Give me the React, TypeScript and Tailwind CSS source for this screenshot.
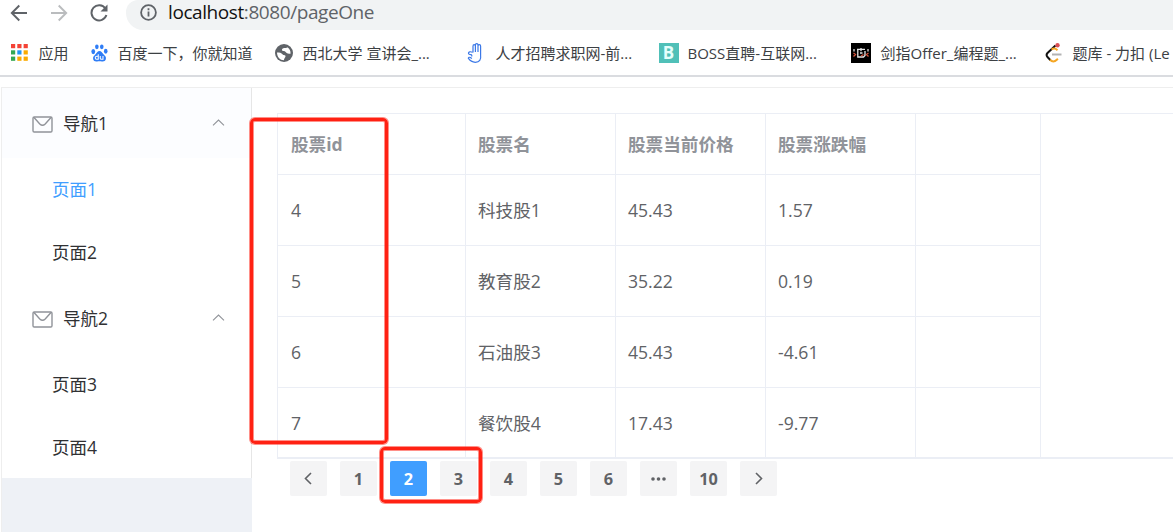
import type { ReactNode } from "react";

const Arrow = ({ flip = false, color }: { flip?: boolean; color: string }) => (
  <svg width="18" height="18" viewBox="0 0 18 18" fill="none" stroke={color} strokeWidth="1.9" className={flip ? "rotate-180" : ""}>
    <path d="M17 9H2M9.3 1.5L1.8 9l7.5 7.5" />
  </svg>
);

const Mail = () => (
  <svg width="21" height="17" viewBox="0 0 21 17" fill="none" stroke="#909399" strokeWidth="1.4">
    <rect x="1" y="1" width="19" height="15" rx="1.2" />
    <path d="M2 1.5l5.8 6.5q2.7 2.6 5.4 0L19 1.5" />
  </svg>
);

const AppsIcon = () => {
  const colors = ["#f44336", "#f44336", "#f44336", "#34a853", "#2196f3", "#fbab00", "#34a853", "#fbab00", "#fbab00"];
  return (
    <svg width="17" height="17" viewBox="0 0 17 17">
      {colors.map((c, i) => (
        <rect key={i} x={(i % 3) * 6.3} y={Math.floor(i / 3) * 6.3} width="4.2" height="4.2" fill={c} />
      ))}
    </svg>
  );
};

const BaiduIcon = () => (
  <svg width="17" height="18" viewBox="0 0 18 19" fill="#2f7df6">
    <ellipse cx="2.4" cy="8" rx="2" ry="2.7" />
    <ellipse cx="6.2" cy="3" rx="1.9" ry="2.6" />
    <ellipse cx="11.4" cy="3" rx="1.9" ry="2.6" />
    <ellipse cx="15.6" cy="7.6" rx="1.9" ry="2.6" />
    <path d="M9 7.5c2 0 2.6 1.8 4.2 3.4 1.8 1.7 3.2 2.9 2.5 5.3-.6 2.2-2.6 2.5-4.2 2.2-1.7-.3-3.3-.3-5 0-1.7.3-3.7 0-4.2-2.2-.6-2.4.8-3.6 2.5-5.3C6.4 9.3 7 7.5 9 7.5z" />
    <path d="M7.7 10.7v5.500H6q-1.6-.2-1.5-1.7.1-1.6 1.6-1.6h1.6M9.8 12.7v2.500q.1 1 1.1 1h1.800v-3.500" fill="none" stroke="#fff" strokeWidth="1.1" />
  </svg>
);

const GlobeIcon = () => (
  <svg width="18" height="18" viewBox="0 0 18 18">
    <circle cx="9" cy="9" r="9" fill="#5f6368" />
    <path d="M2 8.5c2.5 0 4.5.4 5.5 1.8 1 1.3 3.2.3 3 2.2-.2 1.3-1.4 1.5-1.6 3.7C5 16.2 2 13 2 8.5z" fill="#fff" />
    <path d="M8.3 4.2c-1.5.4-1.8 2.3-.4 2.7 1.5.4 2.4.1 3 1.3.7 1.4 2.9 1.5 4.6 1.5.4-2.7-1-5.2-3.1-6.4-.5 1.2-2.4.4-4.1.9z" fill="#fff" />
  </svg>
);

const HandIcon = () => (
  <svg width="17" height="20" viewBox="0 0 17 20" fill="none" stroke="#3b78e7" strokeWidth="1.2">
    <path d="M6 9.500V3.200q0-1.500 1.200-1.500t1.200 1.500V9V2q0-1.300 1.300-1.300T11 2v7V3q0-1.300 1.300-1.300T13.600 3v9q1 7-5.300 7.300Q4 19.300 1.300 15.200q.5-1.500 2-.6l1.600 1M5.500 9.200Q2 8 1.500 10q-.2 1.400 2.300 1.700 1.500.3.800 1.700" />
  </svg>
);

const BossIcon = () => (
  <span className="flex h-5 w-5 items-center justify-center bg-[#50c0b8] text-[17px] font-bold leading-none text-[#e5fffc]">B</span>
);

const NowcoderIcon = () => (
  <svg width="20" height="20" viewBox="0 0 20 20" fill="none" strokeWidth="1.3">
    <rect width="20" height="20" fill="#000" />
    <path d="M6 6.3h8M6.800 7v7h5.700L14 12.500V8M10 5v3.200M9 10h2.500" stroke="#e8e8e8" />
    <path d="M3 6v2.500M17 6v2.500" stroke="#ddd" />
    <path d="M2.500 10l2 1.500-2 2M17.500 10l-2 1.500 2 2M12.500 11.500L10 13" stroke="#d9533b" />
  </svg>
);

const LeetcodeIcon = () => (
  <svg width="17" height="20" viewBox="0 0 17 20" fill="none" strokeWidth="2">
    <path d="M10.500 2.500L2.500 10q-1.800 2 0 4l3 3.200" stroke="#111" />
    <path d="M5 16.800q3.300 3.500 6.800 0l1-1.200M6.500 6.500q3-2.200 6 .7" stroke="#f5a623" />
    <path d="M7 11.500h9.500" stroke="#b3b3b3" />
    <circle cx="12.500" cy="2.200" r="2.200" fill="#d94f54" />
  </svg>
);

const BOOKMARKS: { icon: ReactNode; label: string; box: string; gap: string }[] = [
  { icon: <AppsIcon />, label: "应用", box: "w-[80px]", gap: "w-[28px]" },
  { icon: <BaiduIcon />, label: "百度一下，你就知道", box: "w-[184px]", gap: "w-[27px]" },
  { icon: <GlobeIcon />, label: "西北大学 宣讲会_...", box: "w-[192px]", gap: "w-[28px]" },
  { icon: <HandIcon />, label: "人才招聘求职网-前...", box: "w-[192px]", gap: "w-[29px]" },
  { icon: <BossIcon />, label: "BOSS直聘-互联网...", box: "w-[192px]", gap: "w-[29px]" },
  { icon: <NowcoderIcon />, label: "剑指Offer_编程题_...", box: "w-[194px]", gap: "w-[30px]" },
  { icon: <LeetcodeIcon />, label: "题库 - 力扣 (Le", box: "w-[128px]", gap: "w-[28px]" },
];

const MENUS = [
  { title: "导航1", hover: true, items: ["页面1", "页面2"] },
  { title: "导航2", hover: false, items: ["页面3", "页面4"] },
];

const ROWS = [
  ["4", "科技股1", "45.43", "1.57"],
  ["5", "教育股2", "35.22", "0.19"],
  ["6", "石油股3", "45.43", "-4.61"],
  ["7", "餐饮股4", "17.43", "-9.77"],
];

const PAGES = ["prev", "1", "2", "3", "4", "5", "6", "more", "10", "next"];

const PageLabel = ({ page }: { page: string }) => {
  if (page === "prev" || page === "next") {
    return (
      <svg width="8" height="13" viewBox="0 0 8 13" fill="none" stroke="#606266" strokeWidth="1.6" className={page === "next" ? "rotate-180" : "-ml-[2px]"}>
        <path d="M7 1L1.500 6.500 7 12" />
      </svg>
    );
  }
  if (page === "more") {
    return (
      <svg width="15" height="4" viewBox="0 0 15 4" fill="#606266">
        <circle cx="2" cy="2" r="1.8" />
        <circle cx="7.500" cy="2" r="1.8" />
        <circle cx="13" cy="2" r="1.8" />
      </svg>
    );
  }
  return <span className="mt-[2px]">{page}</span>;
};

const Browser = () => (
  <header className="h-[77px] border-b-2 border-[#dadce0] bg-white">
    <div className="flex h-[30px] items-start">
      <div className="flex h-[25px] w-[126px] shrink-0 items-center gap-[22px] pl-[10px]">
        <Arrow color="#5f6368" />
        <Arrow flip color="#babcbe" />
        <svg width="18" height="18" viewBox="0 0 18 18" fill="none" stroke="#5f6368" strokeWidth="2">
          <path d="M15.400 4.500A7.600 7.600 0 1 0 16.400 11" />
          <path d="M17.500.500v7h-7z" fill="#5f6368" stroke="none" />
        </svg>
      </div>
      <div className="flex h-[30px] flex-1 items-start rounded-bl-[17px] rounded-tl-[12px] bg-[#f1f3f4] pl-[14px]">
        <svg width="17" height="17" viewBox="0 0 17 17" fill="none" stroke="#5f6368" strokeWidth="1.8" className="mt-1">
          <circle cx="8.500" cy="8.500" r="7.400" />
          <path d="M8.500 7.500v5M8.500 4.200v2" />
        </svg>
        <div className="ml-[11px] text-[19px] leading-[24px] tracking-[-0.42px] text-[#5f6368]">
          <span className="text-[#111]">localhost</span>:8080/pageOne
        </div>
      </div>
    </div>
    <nav className="flex h-[45px] items-center overflow-hidden pl-[10.5px] text-[15px] text-[#3c4043]">
      {BOOKMARKS.map((b) => (
        <div key={b.label} className={`flex shrink-0 items-center whitespace-nowrap ${b.box}`}>
          <span className={`shrink-0 ${b.gap}`}>{b.icon}</span>
          <span className="mt-px">{b.label}</span>
        </div>
      ))}
    </nav>
  </header>
);

const Sidebar = () => (
  <aside className="w-[250px] shrink-0 bg-[#eef1f6] text-[17.5px] text-[#303133]">
    <div className="h-[390px] border-r border-[#e6e6e6] bg-white">
      {MENUS.map((m) => (
        <div key={m.title}>
          <div className={`flex h-[70px] items-center pl-[30px] pr-[26px] ${m.hover ? "bg-[#fcfdff]" : ""}`}>
            <span className="mt-[3px]"><Mail /></span>
            <span className="ml-[10px] flex-1">{m.title}</span>
            <svg width="13" height="7" viewBox="0 0 13 7" fill="none" stroke="#909399" strokeWidth="1.1" className="-mt-[2px]">
              <path d="M1 6.300L6.500 1 12 6.300" />
            </svg>
          </div>
          {m.items.map((item) => (
            <div key={item} className={`flex h-[62.5px] items-center pl-[50px] ${item === "页面1" ? "text-[#409eff]" : ""}`}>
              {item}
            </div>
          ))}
        </div>
      ))}
    </div>
  </aside>
);

const StockTable = () => (
  <div className="h-[346px] border-b-2 border-l border-t border-[#ebeef5]">
    <table className="w-[763px] table-fixed border-separate border-spacing-0 text-[17.6px] text-[#606266]">
      <colgroup>
        <col className="w-[188px]" />
        <col className="w-[150px]" />
        <col className="w-[150px]" />
        <col className="w-[150px]" />
        <col className="w-[125px]" />
      </colgroup>
      <thead>
        <tr className="text-left text-[#909399]">
          {["股票id", "股票名", "股票当前价格", "股票涨跌幅", ""].map((h, i) => (
            <th key={i} className={`h-[61px] whitespace-nowrap border-b border-r border-[#ebeef5] p-0 font-bold ${i === 0 ? "pl-[13px]" : "pl-[12px]"}`}>{h}</th>
          ))}
        </tr>
      </thead>
      <tbody>
        {ROWS.map((row, r) => (
          <tr key={row[0]}>
            {[...row, ""].map((cell, i) => (
              <td
                key={i}
                className={`border-r border-[#ebeef5] p-0 ${i === 0 ? "pl-[13px]" : "pl-[12px]"} ${r < 3 ? "h-[71px] border-b" : "h-[70px]"}`}
              >
                {cell}
              </td>
            ))}
          </tr>
        ))}
      </tbody>
    </table>
  </div>
);

const Pagination = () => (
  <div className="mt-[2px] flex gap-[13px] pl-[13px] text-[16.25px] font-bold text-[#606266]">
    {PAGES.map((p) => (
      <button
        key={p}
        className={`flex h-[35px] w-[37px] items-center justify-center rounded-[2px] ${p === "2" ? "bg-[#409eff] text-white" : "bg-[#f4f4f5]"}`}
      >
        <PageLabel page={p} />
      </button>
    ))}
  </div>
);

const FRAME = "absolute rounded-[5px] border-[3px] border-[#ff2113] ring-1 ring-[#ff2113]/50 inset-ring-1 inset-ring-[#ff2113]/50";

export default function App() {
  return (
    <div className="relative h-[532px] w-[1173px] overflow-hidden bg-white font-['Open_Sans','Noto_Sans_CJK_SC',sans-serif]">
      <Browser />
      <div className="ml-px mt-[10px] flex h-[445px] border-l border-t border-[#eee]">
        <Sidebar />
        <main className="min-w-0 flex-1 pl-[25px] pt-[25px]">
          <StockTable />
          <Pagination />
        </main>
      </div>

      {/* highlight frames */}
      <div className={`${FRAME} left-[250px] top-[118px] h-[326px] w-[138px]`} />
      <div className={`${FRAME} left-[380px] top-[447px] h-[56px] w-[102px]`} />
    </div>
  );
}
